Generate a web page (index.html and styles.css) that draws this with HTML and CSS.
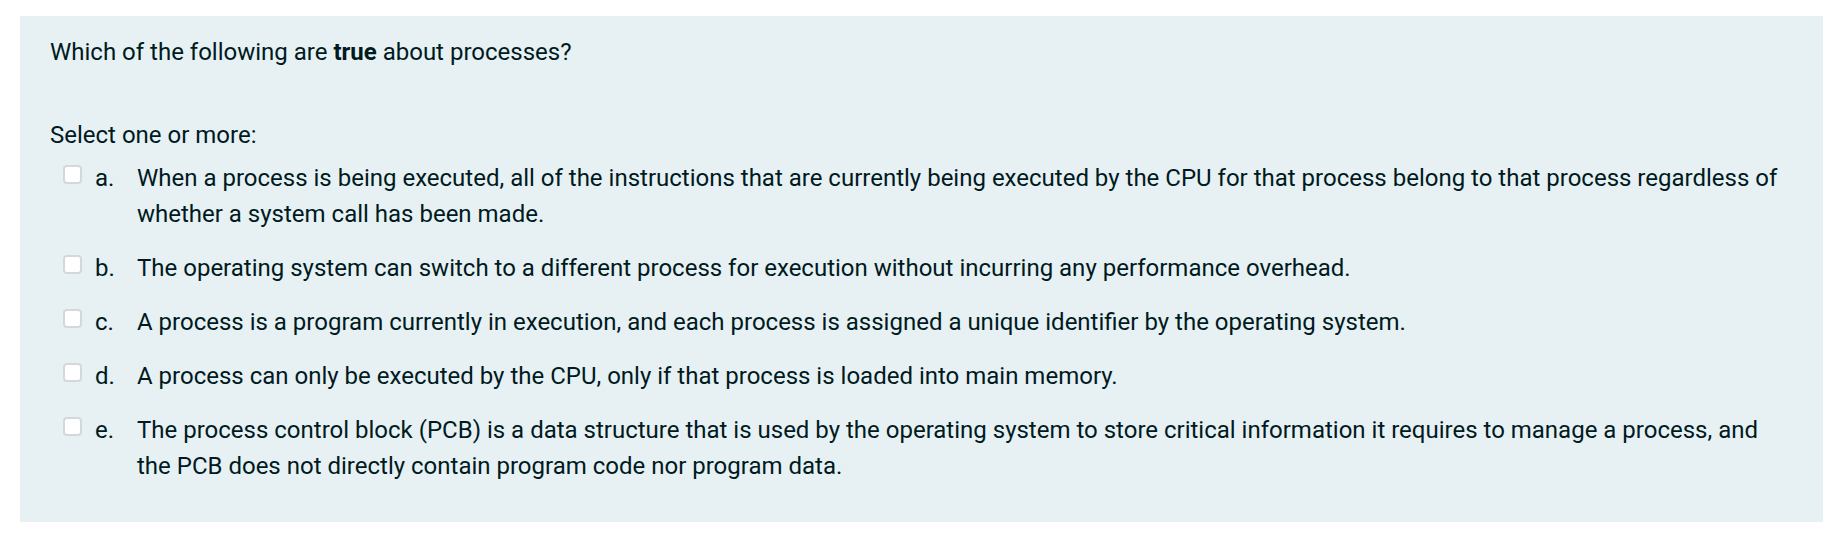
FILE: index.html
```html
<!DOCTYPE html>
<html lang="en">
<head>
<meta charset="utf-8">
<title>Question</title>
<link rel="stylesheet" href="styles.css">
</head>
<body>
<div class="page">
  <div class="formulation">
    <div class="qtext">Which of the following are <strong>true</strong> about processes?</div>
    <div class="prompt">Select one or more:</div>
    <div class="answers">
      <div class="opt">
        <span class="box"></span>
        <span class="letter">a.</span>
        <span class="label">When a process is being executed, all of the instructions that are currently being executed by the CPU for that process belong to that process regardless of whether a system call has been made.</span>
      </div>
      <div class="opt">
        <span class="box"></span>
        <span class="letter">b.</span>
        <span class="label">The operating system can switch to a different process for execution without incurring any performance overhead.</span>
      </div>
      <div class="opt">
        <span class="box"></span>
        <span class="letter">c.</span>
        <span class="label">A process is a program currently in execution, and each process is assigned a unique identifier by the operating system.</span>
      </div>
      <div class="opt">
        <span class="box"></span>
        <span class="letter">d.</span>
        <span class="label">A process can only be executed by the CPU, only if that process is loaded into main memory.</span>
      </div>
      <div class="opt">
        <span class="box"></span>
        <span class="letter">e.</span>
        <span class="label">The process control block (PCB) is a data structure that is used by the operating system to store critical information it requires to manage a process, and the PCB does not directly contain program code nor program data.</span>
      </div>
    </div>
  </div>
</div>
</body>
</html>
```
FILE: styles.css
```css
html, body {
  margin: 0;
  padding: 0;
  background: #ffffff;
}
body {
  font-family: Roboto, "Liberation Sans", sans-serif;
  font-size: 24px;
  line-height: 36px;
  color: #001a1e;
}
.page {
  padding: 16px 13px 13px 20px;
}
.formulation {
  background: #e7f1f4;
  padding: 17.5px 33px 38px 30px;
}
.qtext strong {
  font-weight: 700;
}
.prompt {
  margin-top: 47.3px;
}
.answers {
  margin-top: 7px;
}
.opt {
  display: flex;
  align-items: flex-start;
  margin-bottom: 18px;
}
.opt:last-child {
  margin-bottom: 0;
}
.box {
  flex: none;
  box-sizing: border-box;
  width: 19px;
  height: 19px;
  margin: 5px 0 0 13px;
  background: #ffffff;
  border: 2px solid #d5d8da;
  border-radius: 4px;
}
.letter {
  flex: none;
  width: 42px;
  margin-left: 13px;
}
.label {
  flex: 1;
}
```
